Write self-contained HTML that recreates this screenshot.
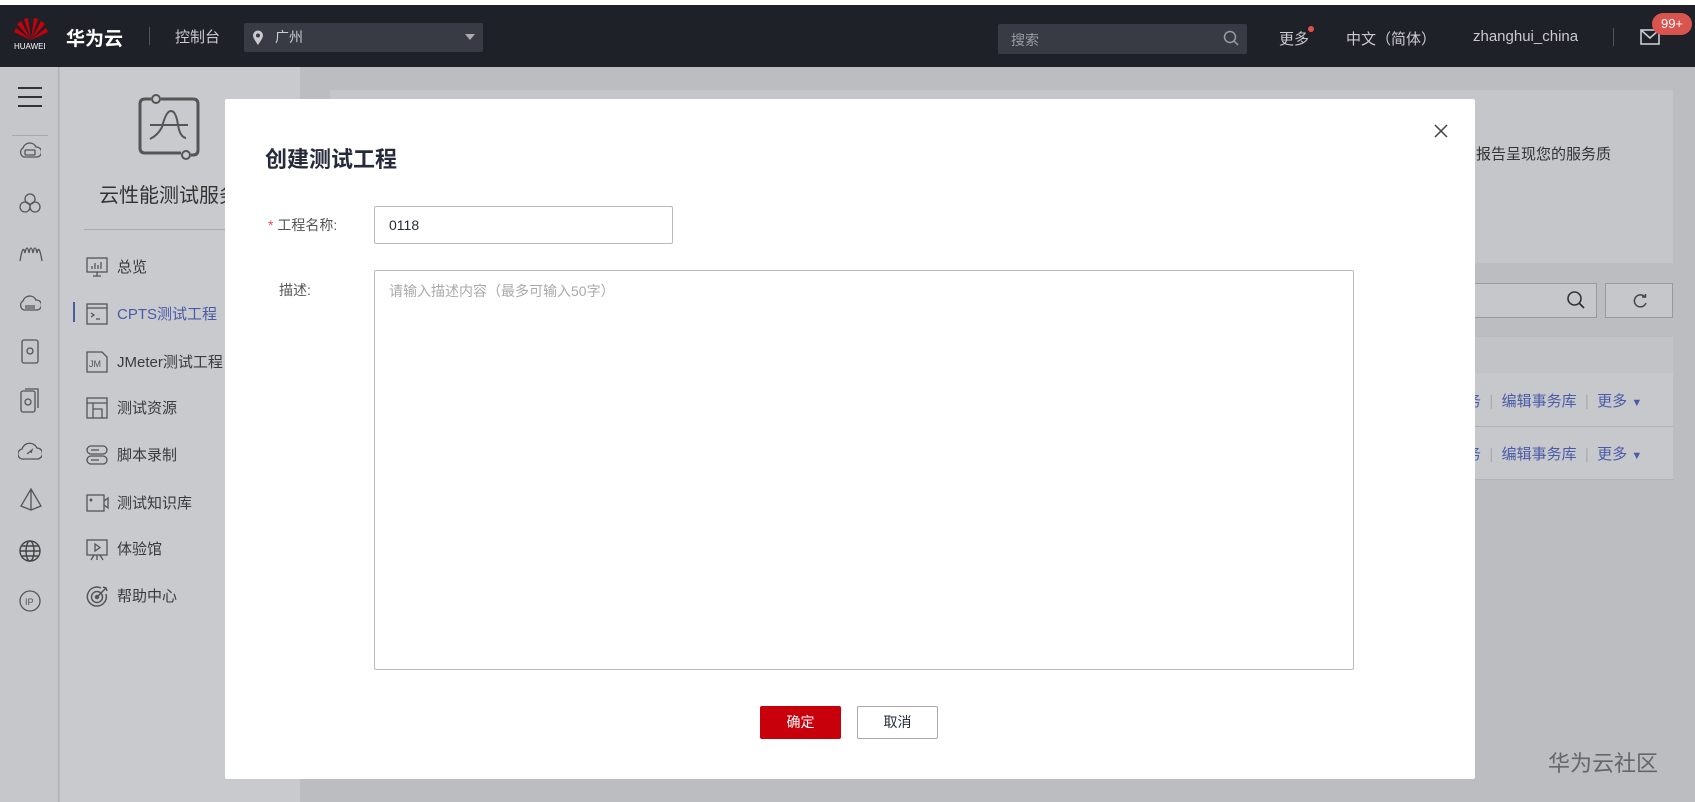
<!DOCTYPE html>
<html><head><meta charset="utf-8">
<style>
*{box-sizing:border-box;margin:0;padding:0}
body{width:1695px;height:802px;overflow:hidden;position:relative;background:#bcbdc1;font-family:"Liberation Sans","Noto Sans CJK SC",sans-serif;font-size:14px;color:#333}
.a{position:absolute}
.hdr{left:0;top:5px;width:1695px;height:62px;background:#1f2128;color:#c9cbd0}
.rail{left:0;top:67px;width:59px;height:735px;background:#c6c7ca;border-right:1px solid #b0b1b4}
.side{left:60px;top:67px;width:240px;height:735px;background:#c9cacd}
.menu{left:117px;font-size:15px;color:#3a3a3a}
.mi{left:86px}
.ri{left:19px}
.modal{left:225px;top:99px;width:1250px;height:680px;background:#fff;border-radius:2px}
.link{color:#4a5aa8;font-size:15px}
</style></head><body>
<div class="a" style="left:0;top:0;width:1695px;height:5px;background:#fff"></div>
<div class="a hdr">
 <svg class="a" style="left:14px;top:12px" width="34" height="24" viewBox="0 0 34 24"><g fill="#c7000b"><path d="M17 23 L10 2 L14 1 Z"/><path d="M17 23 L24 2 L20 1 Z"/><path d="M17 23 L3 7 L7 4 Z"/><path d="M17 23 L31 7 L27 4 Z"/><path d="M17 23 L0 15 L2 11 Z"/><path d="M17 23 L34 15 L32 11 Z"/></g></svg>
 <div class="a" style="left:14px;top:37px;font-size:8px;color:#fff">HUAWEI</div>
 <div class="a" style="left:66px;top:19px;font-size:19px;font-weight:bold;color:#fff">华为云</div>
 <div class="a" style="left:149px;top:22px;width:1px;height:18px;background:#555"></div>
 <div class="a" style="left:175px;top:21px;font-size:15px">控制台</div>
 <div class="a" style="left:244px;top:18px;width:239px;height:29px;background:#383b44;border-radius:2px"></div>
 <svg class="a" style="left:252px;top:25px" width="12" height="16"><path d="M6 15 C2 9 1 7 1 5.5 A5 5 0 0 1 11 5.5 C11 7 10 9 6 15Z" fill="#c9cbd0"/><circle cx="6" cy="5.5" r="2" fill="#383b44"/></svg>
 <div class="a" style="left:275px;top:22px;font-size:14px">广州</div>
 <div class="a" style="left:465px;top:29px;border:5px solid transparent;border-top:6px solid #aaa"></div>
 <div class="a" style="left:998px;top:19px;width:249px;height:30px;background:#383b44;border-radius:2px"></div>
 <div class="a" style="left:1011px;top:25px;font-size:14px;color:#9a9ca3">搜索</div>
 <svg class="a" style="left:1223px;top:25px" width="16" height="16"><circle cx="7" cy="7" r="5.5" stroke="#9a9ca3" stroke-width="1.5" fill="none"/><path d="M11 11 L15 15" stroke="#9a9ca3" stroke-width="1.5"/></svg>
 <div class="a" style="left:1279px;top:23px;font-size:15px">更多</div>
 <div class="a" style="left:1308px;top:21px;width:6px;height:6px;border-radius:3px;background:#e2524a"></div>
 <div class="a" style="left:1346px;top:23px;font-size:15px">中文（简体）</div>
 <div class="a" style="left:1473px;top:23px;font-size:15px">zhanghui_china</div>
 <div class="a" style="left:1613px;top:23px;width:1px;height:18px;background:#555"></div>
 <svg class="a" style="left:1640px;top:24px" width="20" height="16"><rect x="1" y="1" width="18" height="14" fill="none" stroke="#c9cbd0" stroke-width="1.6"/><path d="M1 1 L10 9 L19 1" fill="none" stroke="#c9cbd0" stroke-width="1.6"/></svg>
 <div class="a" style="left:1652px;top:8px;width:40px;height:22px;border-radius:11px;background:#d9534f;color:#fff;font-size:13px;text-align:center;line-height:22px">99+</div>
</div>

<div class="a rail">
 <div class="a" style="left:18px;top:20px;width:24px;height:2px;background:#333;box-shadow:0 9px 0 #333,0 18px 0 #333"></div>
 <div class="a" style="left:12px;top:68px;width:36px;height:1px;background:#aaa"></div>
 <svg class="a ri" style="top:73px" width="22" height="20" fill="none" stroke="#555" stroke-width="1.3"><path d="M5 17 A5 5 0 0 1 4 8 A7 7 0 0 1 17 7 A5 5 0 0 1 18 17 Z"/><rect x="6" y="10" width="10" height="5" rx="1"/></svg>
 <svg class="a ri" style="top:125px" width="22" height="22" fill="none" stroke="#555" stroke-width="1.3"><circle cx="11" cy="7" r="5"/><circle cx="6" cy="15" r="5"/><circle cx="16" cy="15" r="5"/></svg>
 <svg class="a ri" style="top:176px" width="24" height="20" fill="none" stroke="#555" stroke-width="1.3"><path d="M1 18 Q4 0 6 10 Q8 0 10 10 Q12 0 14 10 Q16 0 18 10 Q20 0 23 18"/></svg>
 <svg class="a ri" style="top:226px" width="22" height="20" fill="none" stroke="#555" stroke-width="1.3"><path d="M5 17 A5 5 0 0 1 4 8 A7 7 0 0 1 17 7 A5 5 0 0 1 18 17 Z"/><path d="M6 13 H16 M6 15 H16"/></svg>
 <svg class="a ri" style="top:272px" width="22" height="26" fill="none" stroke="#555" stroke-width="1.3"><rect x="3" y="1" width="16" height="23" rx="2"/><circle cx="11" cy="12" r="3"/></svg>
 <svg class="a ri" style="top:321px" width="22" height="26" fill="none" stroke="#555" stroke-width="1.3"><rect x="2" y="3" width="14" height="21" rx="2"/><path d="M6 1 H19 V20"/><circle cx="9" cy="14" r="3"/></svg>
 <svg class="a ri" style="top:374px;left:18px" width="24" height="20" fill="none" stroke="#555" stroke-width="1.3"><path d="M6 18 A5 5 0 0 1 4 8 A8 8 0 0 1 19 7 A5 5 0 0 1 19 18 Z"/><path d="M9 13 L14 9 L13 12"/></svg>
 <svg class="a ri" style="top:421px" width="24" height="24" fill="none" stroke="#555" stroke-width="1.3"><path d="M12 1 L2 18 L12 22 L22 18 Z M12 1 V22"/></svg>
 <svg class="a ri" style="top:473px" width="24" height="24" fill="none" stroke="#444" stroke-width="1.4"><circle cx="11" cy="11" r="10"/><ellipse cx="11" cy="11" rx="4" ry="10"/><path d="M1 11 H21 M3 6 H19 M3 16 H19"/></svg>
 <svg class="a ri" style="top:523px" width="24" height="24" fill="none" stroke="#555" stroke-width="1.3"><circle cx="11" cy="11" r="10"/><text x="6" y="15" font-size="9" fill="#555" stroke="none" font-family="Liberation Sans">IP</text></svg>
</div>

<div class="a side">
 <svg class="a" style="left:76px;top:26px" width="66" height="70" viewBox="0 0 66 70"><path d="M15 6 H9 Q4 6 4 11 V55 Q4 60 9 60 H45 M55 62 H57 Q62 62 62 57 V11 Q62 6 57 6 H25" fill="none" stroke="#555" stroke-width="3"/><circle cx="20" cy="6" r="4" fill="none" stroke="#555" stroke-width="2"/><circle cx="50" cy="62" r="4" fill="none" stroke="#555" stroke-width="2"/><path d="M14 32 H52" stroke="#555" stroke-width="2"/><path d="M14 46 Q22 42 26 34 Q30 18 35 18 Q40 18 42 32 Q44 44 50 45" fill="none" stroke="#555" stroke-width="2"/></svg>
 <div class="a" style="left:39px;top:112px;font-size:20px;color:#333;white-space:nowrap">云性能测试服务</div>
 <div class="a" style="left:24px;top:162px;width:216px;height:1px;background:#aaa"></div>
</div>
<svg class="a mi" style="top:256px" width="22" height="22" fill="none" stroke="#555" stroke-width="1.3"><rect x="1" y="2" width="20" height="14"/><path d="M6 13 V10 M9 13 V7 M12 13 V9 M15 13 V6 M7 20 H15 M11 16 V20"/></svg><div class="a menu" style="top:256px">总览</div>
<div class="a" style="left:73px;top:302px;width:2px;height:20px;background:#4a5aa8"></div>
<svg class="a mi" style="top:303px" width="22" height="22" fill="none" stroke="#555" stroke-width="1.3"><rect x="1" y="1" width="20" height="20"/><path d="M1 5 H21 M5 10 L8 12 L5 14 M10 16 H14"/></svg><div class="a menu" style="top:303px;color:#4a5aa8">CPTS测试工程</div>
<svg class="a mi" style="top:351px" width="22" height="22" fill="none" stroke="#555" stroke-width="1.3"><path d="M1 1 H16 L21 6 V21 H1 Z"/><text x="3" y="16" font-size="9" fill="#555" stroke="none" font-family="Liberation Sans">JM</text></svg><div class="a menu" style="top:351px">JMeter测试工程</div>
<svg class="a mi" style="top:397px" width="22" height="22" fill="none" stroke="#555" stroke-width="1.3"><rect x="1" y="1" width="20" height="20"/><path d="M1 6 H21 M7 6 V21 M7 12 H16 V21"/></svg><div class="a menu" style="top:397px">测试资源</div>
<svg class="a mi" style="top:444px" width="22" height="22" fill="none" stroke="#555" stroke-width="1.3"><rect x="1" y="2" width="20" height="8" rx="4"/><rect x="1" y="12" width="20" height="8" rx="4"/><path d="M5 6 H13 M5 16 H13"/></svg><div class="a menu" style="top:444px">脚本录制</div>
<svg class="a mi" style="top:492px" width="24" height="22" fill="none" stroke="#555" stroke-width="1.3"><rect x="1" y="3" width="17" height="16"/><path d="M18 9 L22 6 V16 L18 13"/><circle cx="5" cy="8" r="0.8" fill="#555"/></svg><div class="a menu" style="top:492px">测试知识库</div>
<svg class="a mi" style="top:538px" width="22" height="24" fill="none" stroke="#555" stroke-width="1.3"><rect x="1" y="2" width="20" height="15"/><path d="M9 6 L14 9.5 L9 13 Z M5 22 L8 17 M17 22 L14 17 M11 17 V22"/></svg><div class="a menu" style="top:538px">体验馆</div>
<svg class="a mi" style="top:585px" width="24" height="24" fill="none" stroke="#555" stroke-width="1.5"><path d="M20 9 A9.5 9.5 0 1 1 15 3"/><circle cx="11" cy="12" r="5.5"/><circle cx="11" cy="12" r="1.5" fill="#555"/><path d="M11 12 L20 3 M17 2 L20 3 L21 6"/></svg><div class="a menu" style="top:585px">帮助中心</div>

<div class="a" style="left:330px;top:90px;width:1343px;height:173px;background:#c5c6c9"></div>
<div class="a" style="left:1476px;top:143px;font-size:15px;color:#333">报告呈现您的服务质</div>
<div class="a" style="left:1460px;top:283px;width:137px;height:35px;border:1px solid #999;border-left:none;background:#c6c7ca"></div>
<svg class="a" style="left:1566px;top:290px" width="20" height="20"><circle cx="8.5" cy="8.5" r="6.5" stroke="#333" stroke-width="1.6" fill="none"/><path d="M13 13 L18 18" stroke="#333" stroke-width="1.8"/></svg>
<div class="a" style="left:1605px;top:283px;width:68px;height:35px;border:1px solid #999;background:#c6c7ca"></div>
<svg class="a" style="left:1632px;top:293px" width="16" height="16" fill="none" stroke="#444" stroke-width="1.5"><path d="M13 4 A6 6 0 1 0 14 10"/><path d="M10 4 H13.5 V1"/></svg>
<div class="a" style="left:1460px;top:337px;width:213px;height:36px;background:#c2c3c6"></div>
<div class="a" style="left:1460px;top:373px;width:213px;height:106px;background:#c7c8cb"></div>
<div class="a" style="left:1460px;top:426px;width:213px;height:1px;background:#b0b1b4"></div>
<div class="a" style="left:1460px;top:479px;width:213px;height:1px;background:#b0b1b4"></div>
<div class="a link" style="left:1466px;top:390px">务 <span style="color:#aaa">&nbsp;|&nbsp;</span> 编辑事务库 <span style="color:#aaa">&nbsp;|&nbsp;</span> 更多 <span style="font-size:11px">▼</span></div>
<div class="a link" style="left:1466px;top:443px">务 <span style="color:#aaa">&nbsp;|&nbsp;</span> 编辑事务库 <span style="color:#aaa">&nbsp;|&nbsp;</span> 更多 <span style="font-size:11px">▼</span></div>
<div class="a" style="left:1548px;top:746px;font-size:22px;color:#666">华为云社区</div>

<div class="a modal">
 <svg class="a" style="left:1209px;top:25px" width="14" height="14"><path d="M1 1 L13 13 M13 1 L1 13" stroke="#444" stroke-width="1.5"/></svg>
 <div class="a" style="left:40px;top:43px;font-size:22px;font-weight:bold;color:#252b3a">创建测试工程</div>
 <div class="a" style="left:43px;top:116px;font-size:14px;color:#555"><span style="color:#e2524a">*</span> 工程名称:</div>
 <div class="a" style="left:149px;top:107px;width:299px;height:38px;border:1px solid #bbb;border-radius:2px;padding:10px 14px;font-size:14px;color:#252b3a">0118</div>
 <div class="a" style="left:54px;top:181px;font-size:14px;color:#555">描述:</div>
 <div class="a" style="left:149px;top:171px;width:980px;height:400px;border:1px solid #bbb;border-radius:2px;padding:10px 14px;font-size:14px;color:#aaa">请输入描述内容（最多可输入50字）</div>
 <div class="a" style="left:535px;top:607px;width:81px;height:33px;background:#c7000b;border-radius:2px;color:#fff;text-align:center;line-height:33px;font-size:14px">确定</div>
 <div class="a" style="left:632px;top:607px;width:81px;height:33px;border:1px solid #aaa;border-radius:2px;color:#252b3a;text-align:center;line-height:31px;font-size:14px">取消</div>
</div>
</body></html>
